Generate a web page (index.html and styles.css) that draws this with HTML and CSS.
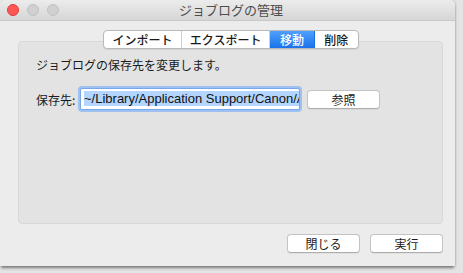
FILE: index.html
```html
<!DOCTYPE html>
<html lang="ja">
<head>
    <meta charset="UTF-8">
    <title>ジョブログの管理</title>
    <link rel="stylesheet" href="styles.css">
</head>
<body>
    <div class="window">
        <div class="titlebar">
            <div class="lights">
                <span class="light close"></span>
                <span class="light off"></span>
                <span class="light off"></span>
            </div>
            <div class="title">ジョブログの管理</div>
        </div>

        <div class="content">
            <div class="tabs">
                <div class="tab w-import">インポート</div>
                <div class="tab w-export">エクスポート</div>
                <div class="tab active w-small">移動</div>
                <div class="tab w-small">削除</div>
            </div>

            <div class="group">
                <p class="note">ジョブログの保存先を変更します。</p>
                <div class="path-row">
                    <label>保存先:</label>
                    <div class="path-input"><span class="sel">~/Library/Application Support/Canon/A</span></div>
                    <button class="btn browse">参照</button>
                </div>
            </div>

            <div class="actions">
                <button class="btn">閉じる</button>
                <button class="btn">実行</button>
            </div>
        </div>
    </div>
</body>
</html>
```

FILE: styles.css
```css
body {
    margin: 0;
    width: 463px;
    height: 273px;
    overflow: hidden;
    background-color: #e4e4e4;
    font-family: "Noto Sans CJK JP", "Liberation Sans", sans-serif;
}
.window {
    width: 455px;
    height: 266px;
    background-color: #ececec;
    border-radius: 5px 5px 0 0;
    box-shadow: 0 3px 3px -1px #7a7a7a, 1px 0 2px rgba(0,0,0,0.15);
}
.titlebar {
    height: 21px;
    display: flex;
    align-items: center;
    background: linear-gradient(#ececec, #d6d6d6);
    border-bottom: 1px solid #c9c9c9;
    border-radius: 5px 5px 0 0;
    box-sizing: border-box;
}
.lights {
    display: flex;
    gap: 8px;
    padding-left: 7px;
    width: 72px;
}
.light {
    width: 12px;
    height: 12px;
    border-radius: 50%;
    box-sizing: border-box;
}
.light.close {
    background-color: #fc5753;
    border: 1px solid #df3d3a;
}
.light.off {
    background-color: #d0d0d0;
    border: 1px solid #c0c0c0;
}
.title {
    flex: 1;
    text-align: center;
    font-size: 13px;
    color: #4d4d4d;
    margin-right: 72px;
    line-height: 20px;
}
.content {
    padding: 9px 12px 0 18px;
}
.tabs {
    display: flex;
    margin-left: 85px;
    width: 256px;
    height: 19px;
    border: 1px solid #b9b9b9;
    border-radius: 4px;
    background-color: #fff;
    box-sizing: border-box;
    overflow: hidden;
    position: relative;
    z-index: 1;
    box-shadow: 0 1px 1px rgba(0,0,0,0.08);
}
.tab {
    font-size: 12px;
    line-height: 17px;
    text-align: center;
    color: #1a1a1a;
    font-weight: 500;
    border-right: 1px solid #cfcfcf;
}
.tab:last-child {
    border-right: none;
}
.w-import { width: 78px; }
.w-export { width: 89px; }
.w-small { width: 44px; }
.tab.active {
    background: linear-gradient(#4fa0fb, #1b72ec);
    color: #fff;
    border-right-color: #1b6fe0;
}
.group {
    margin-top: -8px;
    width: 425px;
    height: 183px;
    box-sizing: border-box;
    background-color: #e3e3e3;
    border: 1px solid #d8d8d8;
    border-radius: 4px;
    padding: 14px 0 0 17px;
}
.note {
    margin: 0;
    font-size: 12px;
    line-height: 18px;
    color: #1a1a1a;
}
.path-row {
    display: flex;
    align-items: center;
    margin-top: 14px;
}
.path-row label {
    font-size: 12px;
    color: #1a1a1a;
    width: 44px;
}
.path-input {
    width: 220px;
    height: 22px;
    box-sizing: border-box;
    border: 1px solid #7aa7e8;
    box-shadow: 0 0 0 2px #9ec1f2;
    border-radius: 2px;
    background-color: #fff;
    overflow: hidden;
    white-space: nowrap;
    font-family: "Liberation Sans", sans-serif;
    font-size: 13px;
    line-height: 20px;
    padding-left: 3px;
    color: #111;
}
.sel {
    background-color: #b4d5fe;
}
.btn {
    font-family: "Noto Sans CJK JP", "Liberation Sans", sans-serif;
    font-size: 12px;
    color: #1a1a1a;
    width: 73px;
    height: 19px;
    padding: 0;
    line-height: 17px;
    background-color: #fff;
    border: 1px solid #c3c3c3;
    border-bottom-color: #aeaeae;
    border-radius: 4px;
    box-shadow: 0 1px 0 rgba(0,0,0,0.05);
}
.browse {
    margin-left: 7px;
}
.actions {
    display: flex;
    justify-content: flex-end;
    gap: 10px;
    width: 425px;
    margin-top: 10px;
}
```
